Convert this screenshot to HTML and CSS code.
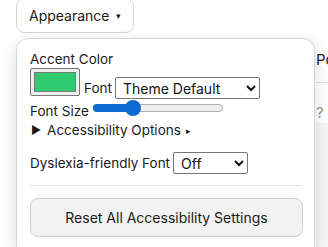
FILE: index.html
```html
<!DOCTYPE html>
<html>
<head>
<meta charset="utf-8">
<link rel="stylesheet" href="styles.css">
</head>
<body>
<div class="page">
  <div class="menu-wrap">
    <button class="menu-btn">Appearance <span class="caret">▾</span></button>
    <div class="panel">
      <div class="row label-row">Accent Color</div>
      <div class="row color-row">
        <span class="swatch"><span class="swatch-fill"></span></span>
        <span class="lbl">Font</span>
        <select class="sel font-sel"><option>Theme Default</option></select>
      </div>
      <div class="row size-row">
        <span class="lbl">Font Size</span>
        <span class="range"><span class="range-fill"></span><span class="thumb"></span></span>
      </div>
      <div class="row summary-row"><span class="tri">▶</span>Accessibility Options <span class="small-tri">▸</span></div>
      <div class="row dys-row">
        <span class="lbl">Dyslexia-friendly Font</span>
        <select class="sel dys-sel"><option>Off</option></select>
      </div>
      <div class="sep"></div>
      <button class="reset">Reset All Accessibility Settings</button>
    </div>
  </div>
  <div class="behind">
    <div class="bh-head">Po</div>
    <div class="bh-row"><span class="q">?</span></div>
    <div class="bh-gray"></div>
  </div>
</div>
</body>
</html>
```
FILE: styles.css
```css
html, body {
  margin: 0;
  padding: 0;
  background: #fff;
}
body {
  font-family: Inter, "Liberation Sans", Arial, sans-serif;
  font-size: 13.5px;
  color: #1a1a1a;
  width: 328px;
  height: 247px;
  overflow: hidden;
}
.page {
  position: relative;
  width: 328px;
  height: 247px;
}
.behind {
  position: absolute;
  left: 316px;
  top: 38px;
  width: 12px;
  height: 215px;
  overflow: hidden;
  white-space: nowrap;
  display: flex;
  flex-direction: column;
}
.bh-head {
  height: 46px;
  line-height: 44px;
  font-size: 15px;
  color: #222;
  border-bottom: 1px solid #dedede;
  box-sizing: border-box;
}
.bh-row {
  height: 44px;
  color: #999;
  font-size: 15px;
  padding-top: 20px;
  box-sizing: border-box;
}
.bh-gray {
  height: 154px;
  background: #f5f5f5;
  border-bottom: 1px solid #e2e2e2;
  box-sizing: border-box;
}
.menu-wrap {
  position: absolute;
  left: 16px;
  top: -2px;
  z-index: 2;
}
.menu-btn {
  font-family: inherit;
  font-size: 14px;
  color: #1a1a1a;
  background: #fff;
  border: 1px solid #d6d6d6;
  border-radius: 8px;
  height: 35px;
  padding: 0 12px;
  width: 118px;
  text-align: left;
  display: flex;
  align-items: center;
  gap: 6px;
}
.caret {
  font-size: 9px;
}
.panel {
  position: absolute;
  left: 0;
  top: 40px;
  width: 299px;
  height: 220px;
  box-sizing: border-box;
  background: #fff;
  border: 1px solid #d8d8d8;
  border-radius: 12px;
  box-shadow: 0 4px 16px rgba(0, 0, 0, 0.14);
  padding: 10px 12px 0 13px;
}
.row {
  display: flex;
  align-items: center;
}
.label-row {
  height: 18px;
  margin-top: 1px;
}
.color-row {
  height: 31px;
  align-items: flex-end;
}
.swatch {
  width: 50px;
  height: 28px;
  box-sizing: border-box;
  border: 1px solid #767676;
  border-radius: 2px;
  background: #efefef;
  padding: 3px;
  display: block;
  margin-bottom: 3px;
}
.swatch-fill {
  display: block;
  width: 100%;
  height: 100%;
  background: #2ecc71;
  border: 1px solid #7a7a7a;
  box-sizing: border-box;
}
.color-row .lbl {
  margin: 0 3px 3px 4px;
  line-height: 16px;
}
.sel {
  font-family: inherit;
  font-size: 14px;
  color: #111;
  height: 22px;
  border: 1px solid #767676;
  border-radius: 2px;
  background: #fff;
  padding: 0 0 0 3px;
  margin: 0;
}
.font-sel {
  width: 145px;
}
.size-row {
  height: 16px;
  margin-top: 4px;
}
.range {
  position: relative;
  width: 130px;
  height: 8px;
  margin-left: 4px;
  margin-top: -6px;
  border: 1px solid #b0b0b0;
  border-radius: 5px;
  background: #efefef;
  box-sizing: border-box;
}
.range-fill {
  position: absolute;
  left: -1px;
  top: -1px;
  width: 40px;
  height: 8px;
  border-radius: 5px;
  background: #0b6bd1;
}
.thumb {
  position: absolute;
  left: 31px;
  top: -5px;
  width: 16px;
  height: 16px;
  border-radius: 50%;
  background: #0b6bd1;
}
.summary-row {
  height: 16px;
  margin-top: 3px;
}
.tri {
  font-size: 11px;
  margin-right: 6px;
  margin-left: 1px;
}
.small-tri {
  font-size: 9px;
  margin-left: 5px;
}
.dys-row {
  margin-top: 14px;
  height: 22px;
}
.dys-sel {
  width: 75px;
  margin: 0 0 0 3px;
}
.sep {
  height: 1px;
  background: #e2e2e2;
  margin-top: 11px;
}
.reset {
  display: block;
  width: 273px;
  height: 39px;
  margin-top: 12px;
  font-family: inherit;
  font-size: 14px;
  color: #1a1a1a;
  background: #f2f2f2;
  border: 1px solid #cfcfcf;
  border-radius: 8px;
}
```
